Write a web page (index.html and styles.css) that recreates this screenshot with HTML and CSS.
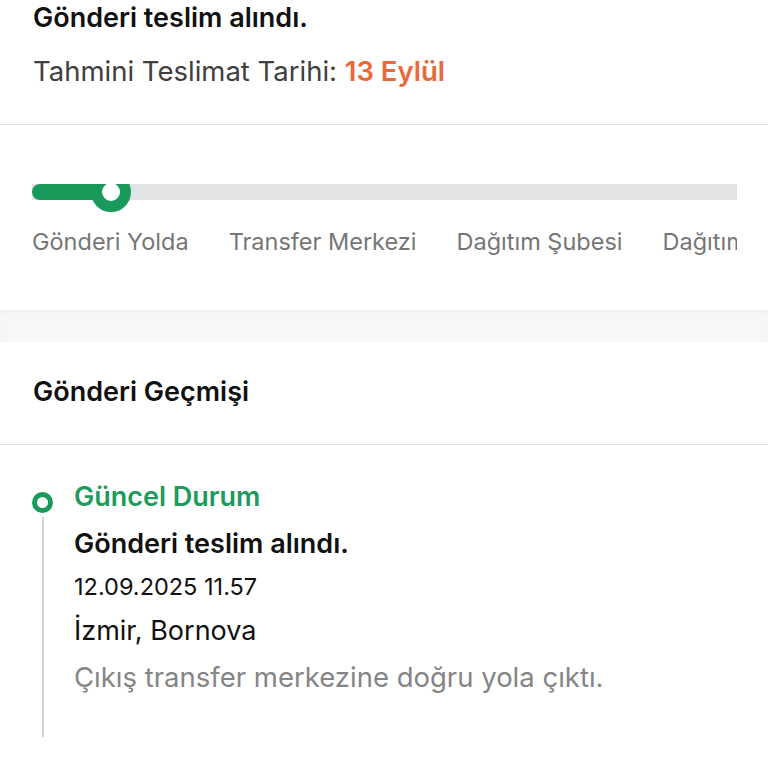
FILE: index.html
```html
<!DOCTYPE html>
<html lang="tr">
<head>
  <meta charset="UTF-8">
  <meta name="viewport" content="width=device-width, initial-scale=1.0">
  <title>Gönderi Takibi</title>
  <link rel="stylesheet" href="styles.css">
</head>
<body>
  <div class="summary">
    <h2 class="summary-title">Gönderi teslim alındı.</h2>
    <p class="summary-date">Tahmini Teslimat Tarihi: <span class="date-value">13 Eylül</span></p>
  </div>

  <div class="progress">
    <div class="progress-inner">
      <div class="track">
        <div class="track-fill"></div>
        <div class="track-knob"></div>
      </div>
      <div class="steps">
        <span class="step">Gönderi Yolda</span>
        <span class="step">Transfer Merkezi</span>
        <span class="step">Dağıtım Şubesi</span>
        <span class="step">Dağıtımda</span>
      </div>
    </div>
  </div>

  <div class="spacer"></div>

  <div class="history">
    <h3 class="history-title">Gönderi Geçmişi</h3>
    <div class="event">
      <div class="rail">
        <span class="rail-dot"></span>
        <span class="rail-line"></span>
      </div>
      <div class="event-body">
        <div class="event-status">Güncel Durum</div>
        <div class="event-title">Gönderi teslim alındı.</div>
        <div class="event-time">12.09.2025 11.57</div>
        <div class="event-place">İzmir, Bornova</div>
        <div class="event-note">Çıkış transfer merkezine doğru yola çıktı.</div>
      </div>
    </div>
  </div>
</body>
</html>
```

FILE: styles.css
```css
* {
  margin: 0;
  padding: 0;
  box-sizing: border-box;
}

body {
  font-family: 'Inter', 'Noto Sans', sans-serif;
  background-color: #ffffff;
  color: #111111;
  width: 768px;
  overflow: hidden;
}

.summary {
  padding: 2px 33px 0;
  height: 125px;
  border-bottom: 1px solid #e4e4e4;
}

.summary-title {
  font-size: 27px;
  font-weight: 600;
  line-height: 32px;
}

.summary-date {
  margin-top: 21px;
  font-size: 27.5px;
  line-height: 32px;
  color: #404040;
}

.date-value {
  color: #e8693a;
  font-weight: 600;
}

.progress {
  height: 185px;
  padding: 59px 31px 0 32px;
}

.progress-inner {
  overflow: hidden;
}

.track {
  position: relative;
  height: 16px;
  background-color: #e2e3e5;
}

.track-fill {
  width: 80px;
  height: 100%;
  background-color: #1a9a5a;
  border-radius: 8px 0 0 8px;
}

.track-knob {
  position: absolute;
  left: 59px;
  top: -12px;
  width: 40px;
  height: 40px;
  border-radius: 50%;
  border: 11px solid #1a9a5a;
  background-color: #ffffff;
}

.steps {
  display: flex;
  gap: 40px;
  margin-top: 28px;
  white-space: nowrap;
}

.step {
  font-size: 23.5px;
  line-height: 28px;
  color: #767676;
  flex-shrink: 0;
}

.spacer {
  height: 32px;
  background-color: #f6f7f8;
  box-shadow: inset 0 3px 4px -2px rgba(0, 0, 0, 0.06);
}

.history-title {
  padding: 34px 33px 0;
  height: 103px;
  font-size: 27px;
  font-weight: 600;
  line-height: 32px;
  border-bottom: 1px solid #e4e4e4;
}

.event {
  display: flex;
  padding: 36px 0 0 32px;
  height: 323px;
}

.rail {
  width: 21px;
  display: flex;
  flex-direction: column;
  align-items: center;
  padding-top: 11px;
}

.rail-dot {
  width: 21px;
  height: 21px;
  border-radius: 50%;
  border: 5.5px solid #1a9a5a;
  flex-shrink: 0;
}

.rail-line {
  width: 2px;
  height: 220px;
  margin-top: 4px;
  background-color: #d4d4d4;
}

.event-body {
  margin-left: 21px;
}

.event-status {
  font-size: 27px;
  font-weight: 600;
  line-height: 32px;
  color: #1e9a5c;
}

.event-title {
  margin-top: 15px;
  font-size: 27px;
  font-weight: 600;
  line-height: 32px;
}

.event-time {
  margin-top: 13px;
  font-size: 23.5px;
  line-height: 28px;
}

.event-place {
  margin-top: 14px;
  font-size: 27px;
  line-height: 32px;
}

.event-note {
  margin-top: 14px;
  font-size: 27.5px;
  line-height: 32px;
  color: #858585;
}
```
